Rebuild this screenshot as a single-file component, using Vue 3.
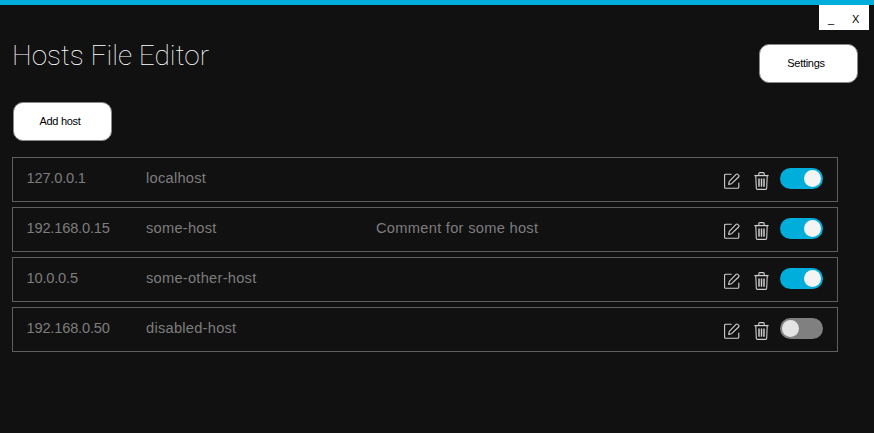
<script setup>
const hosts = [
  { ip: '127.0.0.1', name: 'localhost', comment: '', on: true },
  { ip: '192.168.0.15', name: 'some-host', comment: 'Comment for some host', on: true },
  { ip: '10.0.0.5', name: 'some-other-host', comment: '', on: true },
  { ip: '192.168.0.50', name: 'disabled-host', comment: '', on: false },
]
</script>

<template>
  <div class="app">
    <div class="topbar"></div>
    <div class="winbar">
      <div class="winctl">
        <span class="min">_</span>
        <span class="close">X</span>
      </div>
    </div>
    <header class="head">
      <h1 class="title">Hosts File Editor</h1>
      <button class="btn settings">Settings</button>
    </header>
    <button class="btn add">Add host</button>
    <ul class="list">
      <li v-for="h in hosts" :key="h.ip" class="row">
        <span class="ip">{{ h.ip }}</span>
        <span class="name">{{ h.name }}</span>
        <span class="comment">{{ h.comment }}</span>
        <svg class="edit" width="16" height="16" viewBox="0 0 16 16" fill="none" stroke="#cfcfcf" stroke-width="1.1">
          <path d="M7.2 1.2H1.6a1 1 0 0 0-1 1v12a1 1 0 0 0 1 1h12.2a1 1 0 0 0 1-1V10" stroke-linecap="round" />
          <path d="M4.6 11.4l.7-3L12 1.4a1.3 1.3 0 0 1 1.9 0l.7.7a1.3 1.3 0 0 1 0 1.9l-7 6.7z" stroke-linejoin="round" />
        </svg>
        <svg class="trash" width="15" height="18" viewBox="0 0 15 18" fill="none" stroke="#cfcfcf" stroke-width="1.1">
          <path d="M.4 3.6h14.2" stroke-width="1.3" />
          <path d="M4.8 3.4V1.6a1 1 0 0 1 1-1h3.4a1 1 0 0 1 1 1v1.8" />
          <path d="M1.8 3.8l.5 12.4a1.2 1.2 0 0 0 1.2 1.2h8a1.2 1.2 0 0 0 1.2-1.2l.5-12.4" />
          <path d="M5 6.4v8.4M7.5 6.4v8.4M10 6.4v8.4" stroke-width="1.5" />
        </svg>
        <span class="toggle" :class="{ on: h.on }"><span class="knob"></span></span>
      </li>
    </ul>
  </div>
</template>

<style scoped>
.app {
  width: 874px;
  height: 433px;
  background: #111111;
  font-family: Roboto, "Liberation Sans", sans-serif;
  overflow: hidden;
  box-sizing: border-box;
}
.topbar {
  height: 5px;
  background: #00aedb;
}
.winbar {
  display: flex;
  justify-content: flex-end;
  padding-right: 5px;
  height: 25px;
}
.winctl {
  width: 50px;
  height: 25px;
  background: #fff;
  display: flex;
  align-items: center;
  color: #000;
  font-family: "Liberation Sans", sans-serif;
}
.min {
  font-size: 11px;
  line-height: 11px;
  margin-left: 9px;
  width: 24px;
  position: relative;
  top: 2px;
}
.close {
  font-size: 11px;
  line-height: 12px;
  position: relative;
  top: 1px;
}
.head {
  display: flex;
  justify-content: space-between;
  align-items: flex-start;
  padding: 0 16px 0 12px;
}
.title {
  margin: 8px 0 0;
  font-size: 28px;
  line-height: 36px;
  font-weight: 100;
  color: #fff;
}
.btn {
  width: 99px;
  height: 39px;
  background: #fff;
  border: 1px solid #8a8a8a;
  border-radius: 10px;
  color: #000;
  font-family: "Liberation Sans", sans-serif;
  font-size: 11px;
  letter-spacing: -0.3px;
  padding: 0 5px 2px 0;
  display: block;
}
.settings {
  margin-top: 14px;
}
.add {
  margin: 19px 0 0 13px;
}
.list {
  list-style: none;
  margin: 16px 0 0 12px;
  padding: 0;
  width: 826px;
  display: flex;
  flex-direction: column;
  gap: 5px;
}
.row {
  height: 45px;
  box-sizing: border-box;
  border: 1px solid #5f5f5f;
  display: flex;
  align-items: center;
  padding: 0 14px 0 13.5px;
  color: #7d7d7d;
  font-family: "Liberation Sans", sans-serif;
  font-size: 14.67px;
}
.ip, .name, .comment {
  position: relative;
  top: -2px;
}
.ip { width: 119.5px; letter-spacing: -0.2px; }
.name { width: 230px; letter-spacing: 0.25px; }
.comment { flex: 1; letter-spacing: 0.28px; }
.edit { margin-right: 14px; margin-top: 3px; }
.trash { margin-right: 11px; margin-top: 3px; }
.toggle {
  width: 43px;
  height: 21px;
  border-radius: 11px;
  background: #808080;
  display: flex;
  align-items: center;
  padding: 0 2px;
  box-sizing: border-box;
  margin-top: -2px;
}
.toggle.on {
  background: #00aedb;
  justify-content: flex-end;
}
.knob {
  width: 17px;
  height: 17px;
  border-radius: 50%;
  background: #e4e4e4;
}
.on .knob { background: #f4f4f4; }
</style>

<style>
html, body { margin: 0; background: #111111; }
</style>
